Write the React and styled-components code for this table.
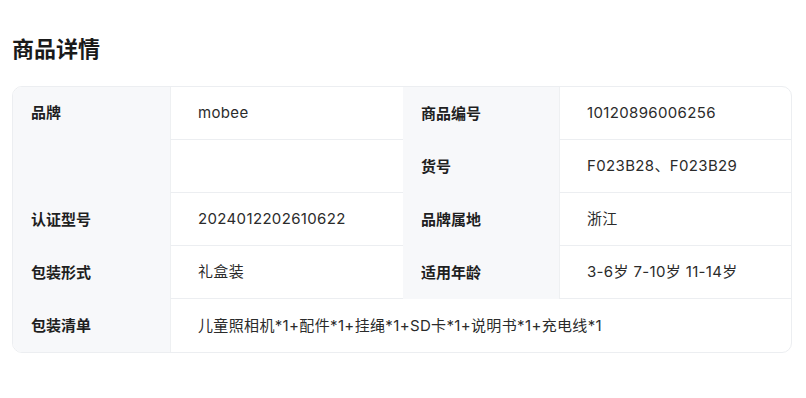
import { createGlobalStyle, styled } from "styled-components";

const GlobalStyle = createGlobalStyle`
  body {
    margin: 0;
    background: #fff;
    font-family: "Inter", "Noto Sans CJK SC", sans-serif;
  }
`;

const rows = [
  { label: "认证型号", value: "2024012202610622", label2: "品牌属地", value2: "浙江" },
  { label: "包装形式", value: "礼盒装", label2: "适用年龄", value2: "3-6岁 7-10岁 11-14岁" },
];

const App = () => {
  return (
    <Page>
      <GlobalStyle />
      <Title>商品详情</Title>
      <Card>
        <Label $span={2}>品牌</Label>
        <Value>mobee</Value>
        <Label>商品编号</Label>
        <Value>10120896006256</Value>
        <Value />
        <Label>货号</Label>
        <Value>F023B28、F023B29</Value>
        {rows.map((r) => (
          <Row key={r.label}>
            <Label>{r.label}</Label>
            <Value>{r.value}</Value>
            <Label>{r.label2}</Label>
            <Value>{r.value2}</Value>
          </Row>
        ))}
        <Label>包装清单</Label>
        <Value $wide $last>
          儿童照相机*1+配件*1+挂绳*1+SD卡*1+说明书*1+充电线*1
        </Value>
      </Card>
    </Page>
  );
};

const Page = styled.div`
  padding: 0 12px;
`;

const Title = styled.h2`
  margin: 34px 0 22px;
  font-size: 22px;
  line-height: 30px;
  font-weight: 600;
  color: #1a1a1a;
`;

const Card = styled.div`
  display: grid;
  grid-template-columns: 157px 233px 156px 1fr;
  grid-auto-rows: 53px;
  width: 780px;
  box-sizing: border-box;
  border: 1px solid #eceef1;
  border-radius: 10px;
  overflow: hidden;
  font-size: 15px;
  line-height: 20px;
`;

const Row = styled.div`
  display: contents;
`;

const Label = styled.div`
  grid-row: ${(p) => (p.$span ? `span ${p.$span}` : "auto")};
  display: flex;
  align-items: ${(p) => (p.$span ? "flex-start" : "center")};
  padding: ${(p) => (p.$span ? "16px 0 0 18px" : "0 0 0 18px")};
  background: #f7f8fa;
  color: #1f1f1f;
  font-weight: 600;
`;

const Value = styled.div`
  grid-column: ${(p) => (p.$wide ? "span 3" : "auto")};
  display: flex;
  align-items: center;
  padding-left: 27px;
  border-left: 1px solid #eef0f2;
  border-bottom: ${(p) => (p.$last ? "none" : "1px solid #eceef1")};
  color: #2b2b2b;
  letter-spacing: 0.35px;
`;

export default App;
